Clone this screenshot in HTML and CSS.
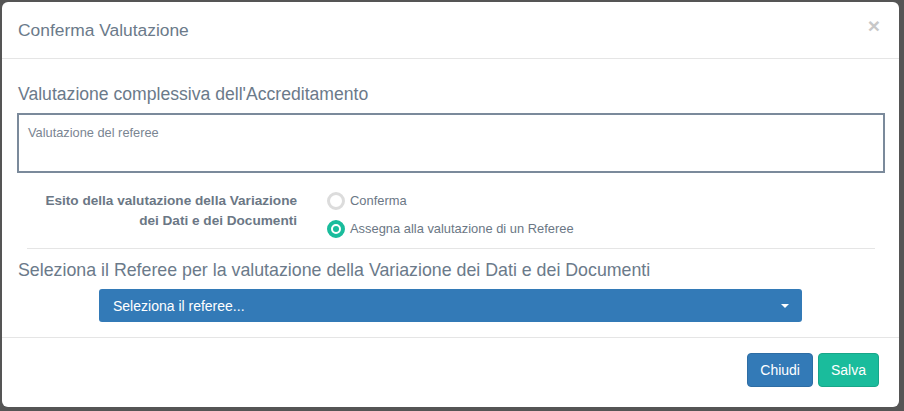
FILE: index.html
```html
<!DOCTYPE html>
<html lang="it">
<head>
	<meta charset="UTF-8">
	<title>Conferma Valutazione</title>
	<link rel="stylesheet" href="styles.css">
</head>
<body>
	<div class="modal">
		<div class="modal-header">
			<h4 class="modal-title">Conferma Valutazione</h4>
			<span class="close">&times;</span>
		</div>
		<div class="modal-body">
			<h3 class="section-title">Valutazione complessiva dell'Accreditamento</h3>
			<textarea class="note" placeholder="Valutazione del referee"></textarea>

			<div class="form-row">
				<label class="row-label">Esito della valutazione della Variazione<br>dei Dati e dei Documenti</label>
				<div class="radios">
					<div class="radio"><span class="dot"></span>Conferma</div>
					<div class="radio checked"><span class="dot"></span>Assegna alla valutazione di un Referee</div>
				</div>
			</div>
			<hr class="sep">

			<h3 class="section-title second">Seleziona il Referee per la valutazione della Variazione dei Dati e dei Documenti</h3>
			<div class="select-wrap">
				<div class="select">
					<span>Seleziona il referee...</span>
					<span class="caret"></span>
				</div>
			</div>
		</div>
		<div class="modal-footer">
			<button class="btn btn-primary">Chiudi</button>
			<button class="btn btn-success">Salva</button>
		</div>
	</div>
</body>
</html>
```
FILE: styles.css
```css
html, body { margin: 0; height: 100%; }
body { background: #555; padding: 2px 5px 4px 2px; box-sizing: border-box; font-family: "Liberation Sans", Arial, sans-serif; color: #6b7a8a; }

.modal { background: #fff; border-radius: 6px; height: 405px; display: flex; flex-direction: column; overflow: hidden; }

.modal-header { height: 56px; border-bottom: 1px solid #e5e5e5; display: flex; align-items: center; justify-content: space-between; padding: 0 19px 0 16px; }
.modal-title { margin: 0; font-size: 17.4px; font-weight: normal; color: #6b7a8a; padding-top: 1px; }
.close { color: #c8c8c8; font-size: 21px; font-weight: bold; line-height: 1; margin-top: -10px; }

.modal-body { flex: 1; padding: 0 14px 0 15px; }
.section-title { margin: 25px 0 0 1px; font-size: 17.6px; font-weight: normal; line-height: 20px; color: #6b7a8a; }
.section-title.second { margin-top: 11px; font-size: 17.8px; }

.note { display: block; box-sizing: border-box; width: 100%; height: 60px; margin-top: 9px; border: 2px solid #7b8a9b; resize: none; padding: 10px 9px; font-family: "Liberation Sans", Arial, sans-serif; font-size: 12.8px; }
.note::placeholder { color: #7a8592; }

.form-row { display: flex; margin-top: 17px; }
.row-label { width: 280px; text-align: right; font-weight: bold; font-size: 13.6px; line-height: 20px; color: #6b7785; padding-top: 1px; }
.radios { margin-left: 30px; padding-top: 1px; }
.radio { display: flex; align-items: center; font-size: 12.9px; color: #6b7785; height: 19px; margin-bottom: 9px; }
.dot { width: 18px; height: 18px; border-radius: 50%; border: 3px solid #dcdcdc; box-sizing: border-box; margin-right: 5px; flex: none; }
.radio.checked .dot { border: 4px solid #1abc9c; background: #fff; position: relative; }
.radio.checked .dot::after { content: ""; position: absolute; left: 2px; top: 2px; width: 6px; height: 6px; border-radius: 50%; background: #1abc9c; }

.sep { border: 0; border-top: 1px solid #e5e5e5; margin: 1px 10px 0 10px; }

.select-wrap { padding: 9px 83px 0 82px; }
.select { background: #337ab7; border-radius: 3px; height: 33px; display: flex; align-items: center; justify-content: space-between; padding: 0 13px 0 14px; color: #fff; font-size: 14px; }
.caret { width: 0; height: 0; border-left: 4px solid transparent; border-right: 4px solid transparent; border-top: 4px solid #fff; }

.modal-footer { border-top: 1px solid #e5e5e5; display: flex; justify-content: flex-end; gap: 5px; padding: 15px 20px 20px 15px; height: 70px; box-sizing: border-box; }
.btn { font-family: "Liberation Sans", Arial, sans-serif; font-size: 14px; color: #fff; border: 1px solid transparent; border-radius: 4px; padding: 0 12px; height: 34px; }
.btn-primary { background: #337ab7; border-color: #2e6da4; }
.btn-success { background: #1abc9c; border-color: #18a689; }
```
